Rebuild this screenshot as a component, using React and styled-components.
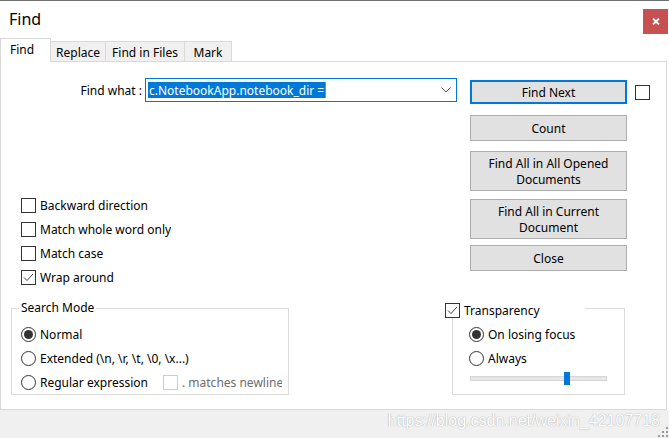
import React from 'react';
import styled, { createGlobalStyle } from 'styled-components';

const GlobalStyle = createGlobalStyle`
  html, body {
    margin: 0;
    padding: 0;
    background: #ffffff;
  }
`;

const Window = styled.div`
  width: 669px;
  height: 438px;
  box-sizing: border-box;
  border-top: 1px solid #6f6f6f;
  display: flex;
  flex-direction: column;
  background: #ffffff;
  overflow: hidden;
  font-family: 'Noto Sans', 'Liberation Sans', sans-serif;
  font-size: 12px;
  line-height: 16px;
  color: #000000;
`;

const TitleBar = styled.div`
  height: 37px;
  flex: none;
  display: flex;
  align-items: flex-start;
  justify-content: space-between;
`;

const Title = styled.div`
  font-size: 16px;
  line-height: 20px;
  margin: 8px 0 0 9px;
`;

const CloseButton = styled.div`
  width: 25px;
  height: 25px;
  margin: 8px 1px 0 0;
  background: #c75050;
  display: flex;
  align-items: center;
  justify-content: center;
`;

const TabStrip = styled.div`
  height: 23px;
  flex: none;
  display: flex;
  align-items: flex-end;
  position: relative;
  z-index: 1;
`;

const Tab = styled.div`
  box-sizing: border-box;
  width: ${(p) => p.$w}px;
  height: ${(p) => (p.$active ? 24 : 20)}px;
  margin-bottom: ${(p) => (p.$active ? -1 : 0)}px;
  padding: ${(p) => (p.$active ? '3px 0 0 9px' : '3px 0 0 0')};
  text-align: ${(p) => (p.$active ? 'left' : 'center')};
  background: ${(p) => (p.$active ? '#ffffff' : '#f0f0f0')};
  border: 1px solid #d9d9d9;
  border-bottom: none;
  border-left: ${(p) => (p.$first ? '1px solid #d9d9d9' : 'none')};
  white-space: nowrap;
`;

const Panel = styled.div`
  flex: none;
  box-sizing: border-box;
  width: 667px;
  height: 349px;
  border: 1px solid #d9d9d9;
  background: #ffffff;
  display: flex;
  flex-direction: column;
`;

const TopSection = styled.div`
  display: flex;
  align-items: flex-start;
`;

const LeftCol = styled.div`
  width: 457px;
  display: flex;
  flex-direction: column;
`;

const FindRow = styled.div`
  display: flex;
  align-items: center;
  margin-top: 16px;
  height: 24px;
`;

const FindLabel = styled.label`
  width: 141px;
  margin-right: 3px;
  padding-top: 2px;
  text-align: right;
  white-space: nowrap;
`;

const Combo = styled.div`
  box-sizing: border-box;
  width: 312px;
  height: 24px;
  border: 1px solid #0078d7;
  display: flex;
  align-items: center;
  padding: 0 5px 0 2px;
`;

const Selected = styled.span`
  background: #0078d7;
  color: #ffffff;
  line-height: 15px;
  padding: 1px 1px 0;
  white-space: nowrap;
  border-right: 1px solid #e07a2a;
`;

const Chevron = styled.svg`
  margin-left: auto;
  flex: none;
`;

const OptionList = styled.div`
  display: flex;
  flex-direction: column;
  margin-top: 91px;
  padding-left: 20px;
`;

const OptionRow = styled.div`
  height: 24px;
  display: flex;
  align-items: center;
  gap: 4px;
  white-space: nowrap;
`;

const Box = styled.span`
  box-sizing: border-box;
  flex: none;
  width: 15px;
  height: 15px;
  border: 1px solid ${(p) => (p.$disabled ? '#cccccc' : '#333333')};
  background: #ffffff;
  display: inline-flex;
  align-items: center;
  justify-content: center;
`;

const Radio = styled.span`
  box-sizing: border-box;
  flex: none;
  width: 15px;
  height: 15px;
  border-radius: 50%;
  border: 1px solid #333333;
  background: #ffffff;
  display: inline-flex;
  align-items: center;
  justify-content: center;

  &::after {
    content: '';
    width: 9px;
    height: 9px;
    border-radius: 50%;
    background: ${(p) => (p.$on ? '#333333' : 'transparent')};
  }
`;

const OptionText = styled.span`
  padding-top: 2px;
  width: ${(p) => (p.$w ? `${p.$w}px` : 'auto')};
  color: ${(p) => (p.$muted ? '#6d6d6d' : '#000000')};
  max-width: ${(p) => (p.$max ? `${p.$max}px` : 'none')};
  overflow: hidden;
`;

const RightCol = styled.div`
  margin: 18px 0 0 12px;
  display: flex;
  align-items: flex-start;
`;

const ButtonStack = styled.div`
  width: 157px;
  display: flex;
  flex-direction: column;
`;

const Button = styled.button`
  box-sizing: border-box;
  height: ${(p) => p.$h}px;
  margin: ${(p) => p.$mt}px 0 0 0;
  padding: 2px 0 0 0;
  background: #e1e1e1;
  border: ${(p) => (p.$primary ? '2px solid #0078d7' : '1px solid #adadad')};
  font-family: inherit;
  font-size: 12px;
  line-height: 16px;
  color: #000000;
  text-align: center;
`;

const SideBox = styled(Box)`
  margin: 5px 0 0 8px;
`;

const BottomSection = styled.div`
  display: flex;
  align-items: flex-start;
  margin-top: 19px;
`;

const Group = styled.div`
  box-sizing: border-box;
  position: relative;
  width: ${(p) => p.$w}px;
  height: 87px;
  margin-left: ${(p) => p.$ml}px;
  padding: 13px 0 0 ${(p) => p.$pl}px;
  border: 1px solid #dcdcdc;
`;

const Legend = styled.div`
  position: absolute;
  top: -10px;
  left: 7px;
  padding: 1px 2px 0;
  background: #ffffff;
  white-space: nowrap;
`;

const CheckLegend = styled.div`
  position: absolute;
  top: -7px;
  left: -8px;
  width: 140px;
  height: 16px;
  background: #ffffff;
  display: flex;
  align-items: center;
  gap: 4px;
`;

const Track = styled.div`
  position: relative;
  box-sizing: border-box;
  width: 137px;
  height: 5px;
  margin: 6px 0 0 1px;
  background: #e7e7ea;
  border: 1px solid #d6d6d6;
`;

const Thumb = styled.div`
  position: absolute;
  top: -5px;
  width: 6px;
  height: 13px;
  background: #0078d7;
`;

const Footer = styled.div`
  flex: 1;
  position: relative;
  background: #f0f0f0;
  display: flex;
  justify-content: flex-end;
  align-items: flex-start;
  padding-right: 9px;
`;

const Watermark = styled.span`
  font-family: 'Liberation Sans', Arial, sans-serif;
  font-size: 16px;
  line-height: 20px;
  padding-top: 1px;
  color: #ffffff;
  text-shadow: 0 0 1px #b4b4b4, 0 0 1px #b4b4b4;
  white-space: nowrap;
`;

const Grip = styled.svg`
  position: absolute;
  right: 0;
  bottom: 0;
`;

const Check = () => (
  <svg width="13" height="13" viewBox="0 0 13 13">
    <polyline points="2,6.5 5,9.5 11,3" fill="none" stroke="#444" strokeWidth="1" />
  </svg>
);

const CheckBox = ({ checked, disabled }) => (
  <Box $disabled={disabled}>{checked && <Check />}</Box>
);

const options = [
  { label: 'Backward direction' },
  { label: 'Match whole word only' },
  { label: 'Match case' },
  { label: 'Wrap around', checked: true },
];

const buttons = [
  { text: 'Find Next', h: 24, mt: 0, primary: true },
  { text: 'Count', h: 26, mt: 11 },
  { text: ['Find All in All Opened', 'Documents'], h: 40, mt: 10 },
  { text: ['Find All in Current', 'Document'], h: 40, mt: 8 },
  { text: 'Close', h: 26, mt: 6 },
];

const tabs = [
  { label: 'Find', w: 51, active: true },
  { label: 'Replace', w: 55 },
  { label: 'Find in Files', w: 79 },
  { label: 'Mark', w: 47 },
];

export default function App() {
  return (
    <>
      <GlobalStyle />
      <Window>
        <TitleBar>
          <Title>Find</Title>
          <CloseButton>
            <svg width="8" height="7" viewBox="0 0 8 7">
              <path d="M1 0.5 L7 6.5 M7 0.5 L1 6.5" stroke="#ffffff" strokeWidth="1.8" />
            </svg>
          </CloseButton>
        </TitleBar>

        <TabStrip>
          {tabs.map((t, i) => (
            <Tab key={t.label} $w={t.w} $active={t.active} $first={i === 0}>
              {t.label}
            </Tab>
          ))}
        </TabStrip>

        <Panel>
          <TopSection>
            <LeftCol>
              <FindRow>
                <FindLabel>Find what :</FindLabel>
                <Combo>
                  <Selected>c.NotebookApp.notebook_dir =</Selected>
                  <Chevron width="10" height="6" viewBox="0 0 10 6">
                    <polyline points="0.5,0.5 5,5 9.5,0.5" fill="none" stroke="#555" strokeWidth="1" />
                  </Chevron>
                </Combo>
              </FindRow>
              <OptionList>
                {options.map((o) => (
                  <OptionRow key={o.label}>
                    <CheckBox checked={o.checked} />
                    <OptionText>{o.label}</OptionText>
                  </OptionRow>
                ))}
              </OptionList>
            </LeftCol>

            <RightCol>
              <ButtonStack>
                {buttons.map((b, i) => (
                  <Button key={i} $h={b.h} $mt={b.mt} $primary={b.primary}>
                    {Array.isArray(b.text) ? (
                      <>
                        {b.text[0]}
                        <br />
                        {b.text[1]}
                      </>
                    ) : (
                      b.text
                    )}
                  </Button>
                ))}
              </ButtonStack>
              <SideBox />
            </RightCol>
          </TopSection>

          <BottomSection>
            <Group $w={278} $ml={10} $pl={9}>
              <Legend>Search Mode</Legend>
              <OptionRow>
                <Radio $on />
                <OptionText>Normal</OptionText>
              </OptionRow>
              <OptionRow>
                <Radio />
                <OptionText>Extended (\n, \r, \t, \0, \x...)</OptionText>
              </OptionRow>
              <OptionRow>
                <Radio />
                <OptionText $w={119}>Regular expression</OptionText>
                <CheckBox disabled />
                <OptionText $muted $max={100}>. matches newline</OptionText>
              </OptionRow>
            </Group>

            <Group $w={173} $ml={163} $pl={16}>
              <CheckLegend>
                <CheckBox checked />
                <OptionText>Transparency</OptionText>
              </CheckLegend>
              <OptionRow>
                <Radio $on />
                <OptionText>On losing focus</OptionText>
              </OptionRow>
              <OptionRow>
                <Radio />
                <OptionText>Always</OptionText>
              </OptionRow>
              <Track>
                <Thumb style={{ left: 93 }} />
              </Track>
            </Group>
          </BottomSection>
        </Panel>

        <Footer>
          <Watermark>https://blog.csdn.net/weixin_42107718</Watermark>
          <Grip width="12" height="12" viewBox="0 0 12 12">
            {[
              [9, 1],
              [9, 5],
              [5, 5],
              [9, 9],
              [5, 9],
              [1, 9],
            ].map(([x, y]) => (
              <rect key={`${x}-${y}`} x={x} y={y} width="2" height="2" fill="#9a9a9a" />
            ))}
          </Grip>
        </Footer>
      </Window>
    </>
  );
}
